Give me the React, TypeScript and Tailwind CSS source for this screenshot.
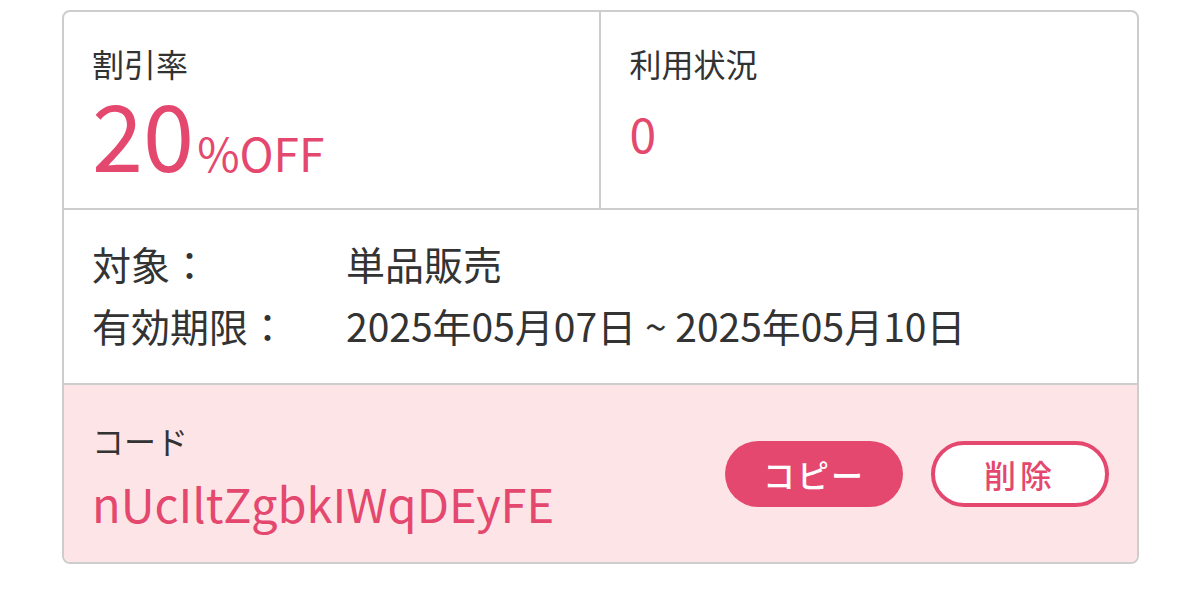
const pink = "text-[#e4486e]";

const CouponCard: React.FC = () => {
    return (
        <div className="w-[1077px] ml-[62px] mt-[10px] rounded-[8px] border-2 border-[#cdcdcd] overflow-hidden text-[#333333]">
            <div className="grid grid-cols-2 h-[198px] border-b-2 border-[#cdcdcd]">
                <div className="border-r-2 border-[#cdcdcd] pl-[28px] pt-[32px]">
                    <div className="text-[32px] leading-[38px]">割引率</div>
                    <div className={`flex items-baseline leading-none mt-[4px] ${pink}`}>
                        <span className="text-[92px] leading-none">20</span>
                        <span className="text-[46px] leading-none ml-[3px]">%OFF</span>
                    </div>
                </div>
                <div className="pl-[29px] pt-[32px]">
                    <div className="text-[32px] leading-[38px]">利用状況</div>
                    <div className={`text-[48px] leading-none mt-[26px] ${pink}`}>0</div>
                </div>
            </div>

            <div className="px-[28px] pt-[22px] pb-[27px] border-b-2 border-[#cdcdcd] text-[39px] leading-[62px]">
                <div className="grid grid-cols-[254px_1fr]">
                    <div>対象：</div>
                    <div>単品販売</div>
                </div>
                <div className="grid grid-cols-[254px_1fr]">
                    <div>有効期限：</div>
                    <div>2025年05月07日 ~ 2025年05月10日</div>
                </div>
            </div>

            <div className="h-[177px] bg-[#fde4e7] pl-[28px] pr-[28px] flex items-center justify-between">
                <div className="pt-[4px]">
                    <div className="text-[32px] leading-[48px]">コード</div>
                    <div className={`text-[47px] leading-[66px] mt-[6px] ${pink}`}>nUcIltZgbkIWqDEyFE</div>
                </div>
                <div className="flex gap-[28px]">
                    <button className="w-[178px] h-[66px] rounded-full bg-[#e4486e] text-white text-[32px] font-medium tracking-[2px]">
                        コピー
                    </button>
                    <button className={`w-[178px] h-[66px] rounded-full bg-white border-4 border-[#e4486e] text-[32px] font-medium tracking-[4px] ${pink}`}>
                        削除
                    </button>
                </div>
            </div>
        </div>
    );
};

export default function App() {
    return (
        <div className="w-[1200px] h-[602px] bg-white" style={{ fontFamily: '"Noto Sans CJK JP", "Noto Sans", sans-serif' }}>
            <CouponCard />
        </div>
    );
}
